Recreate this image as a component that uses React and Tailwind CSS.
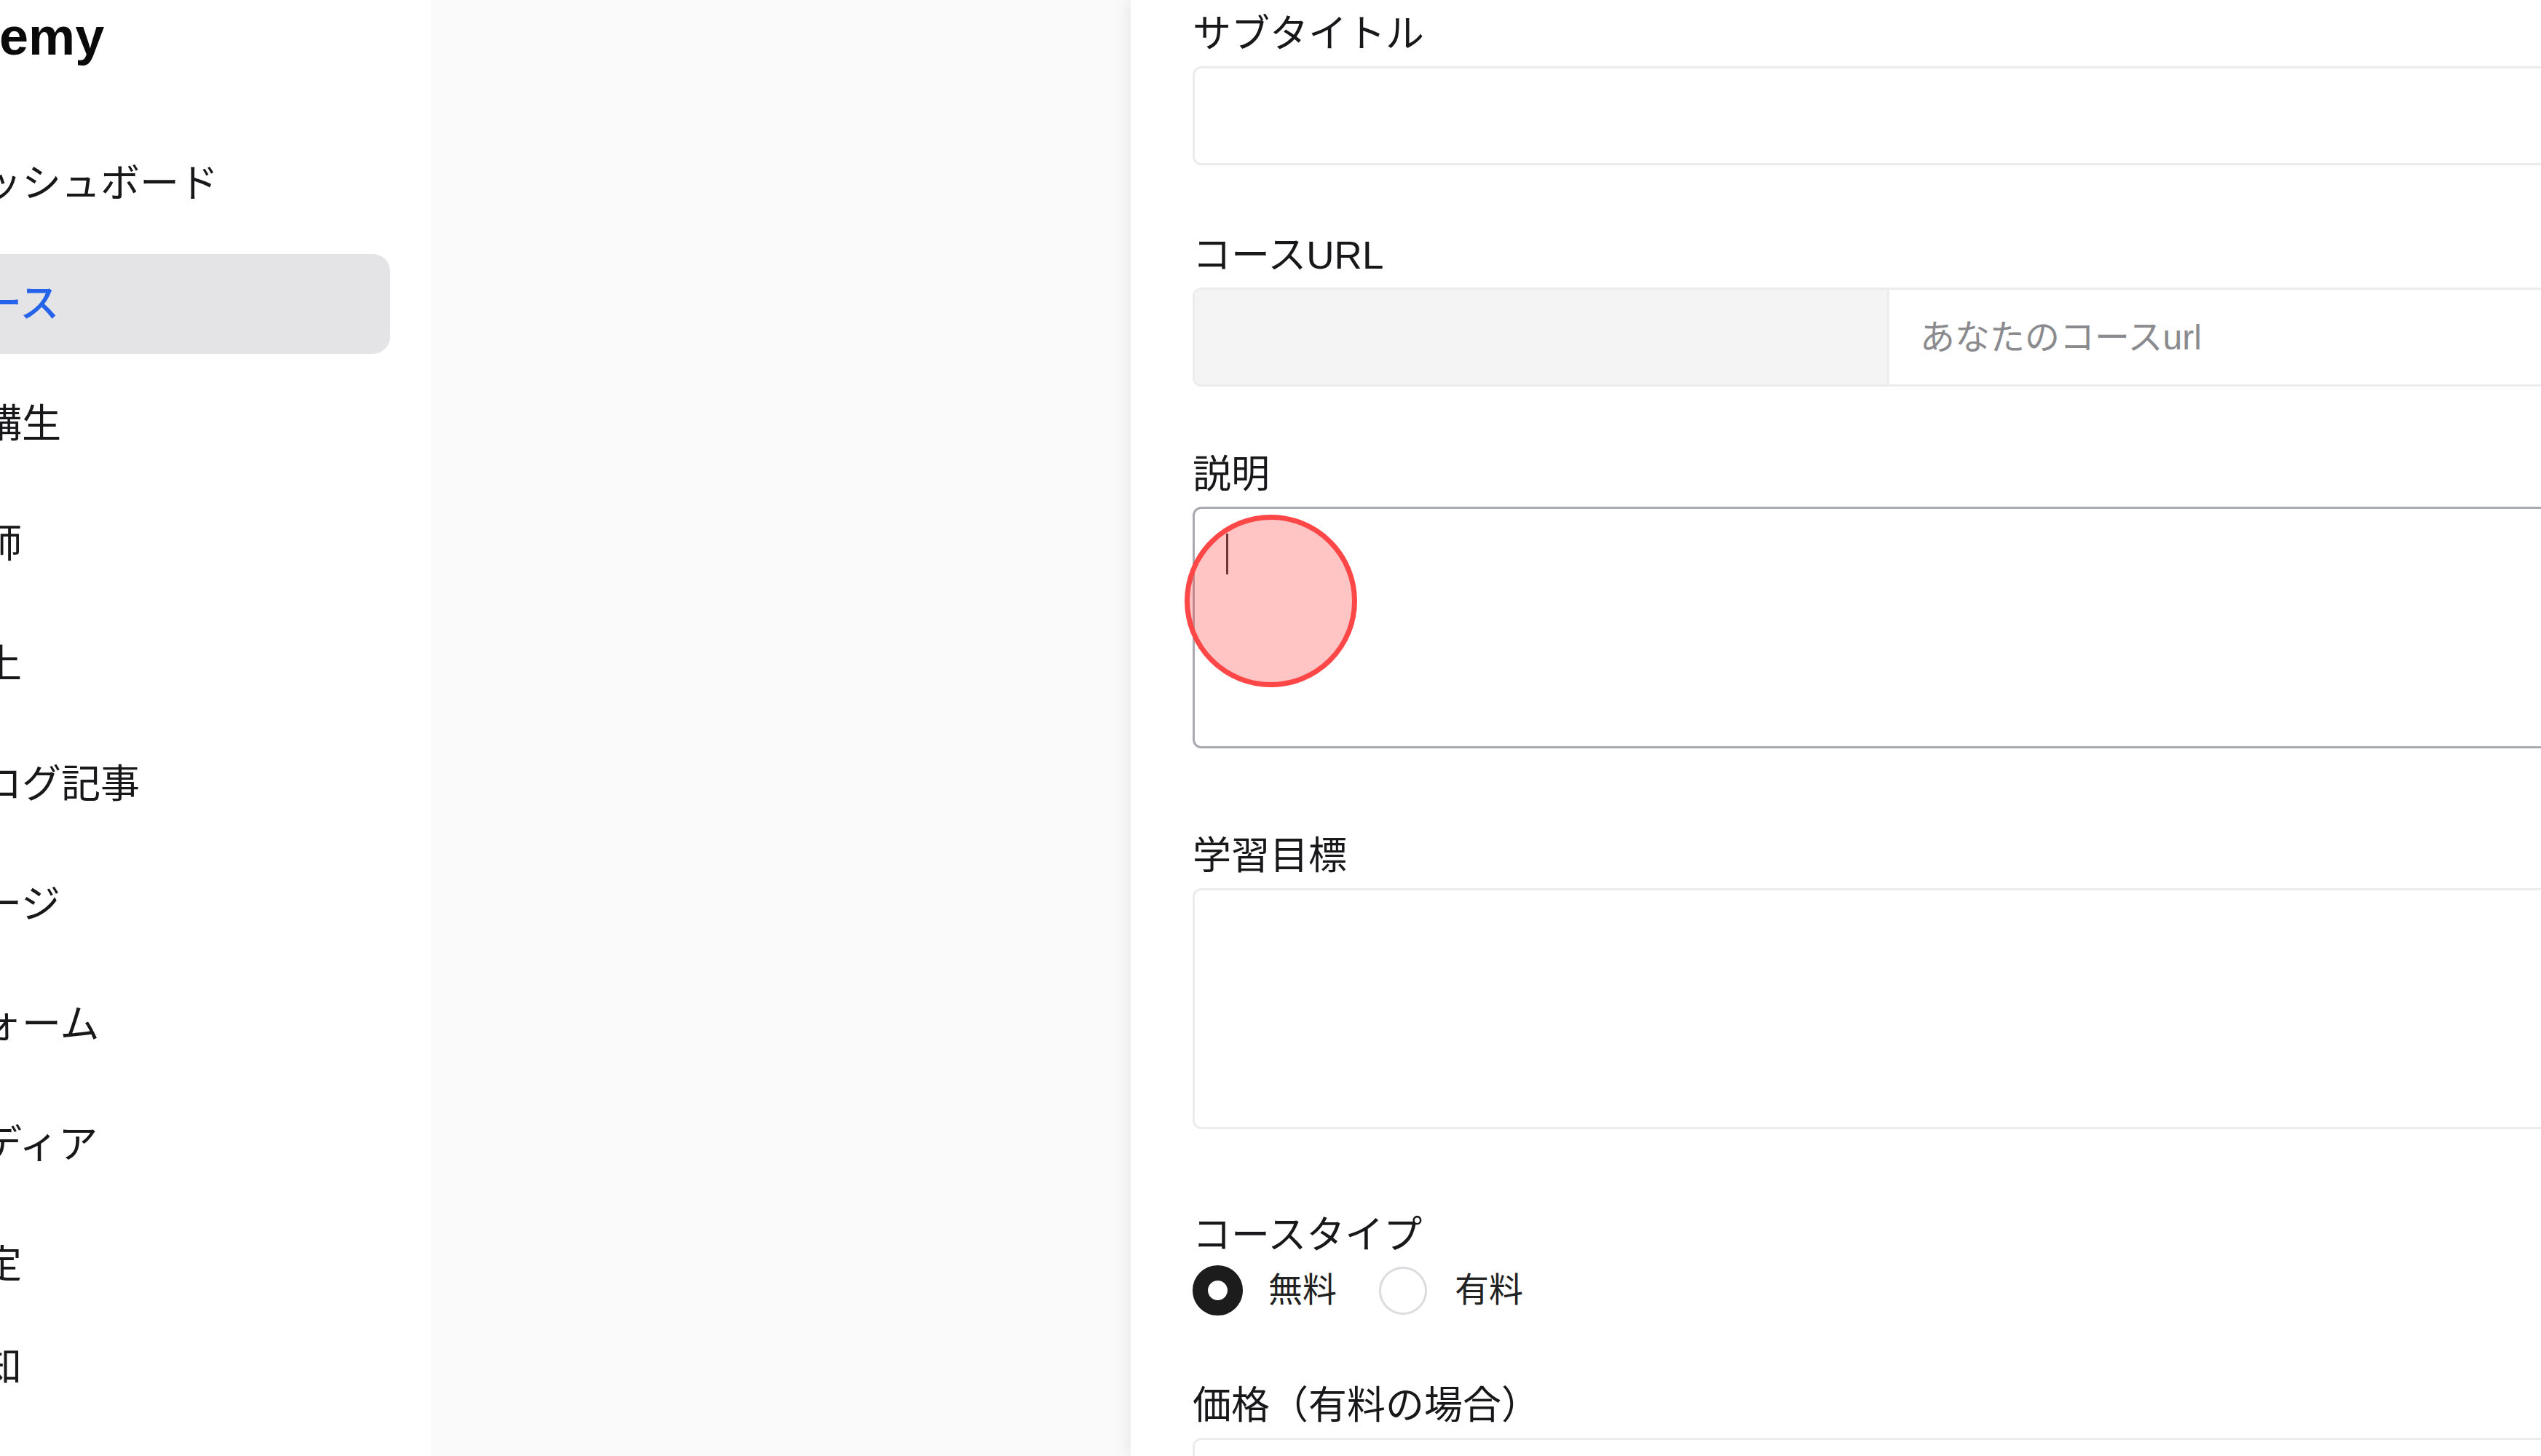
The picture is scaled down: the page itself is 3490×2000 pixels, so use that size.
import { useState } from 'react'

const NAV = [
  { label: 'ダッシュボード' },
  { label: 'コース', active: true },
  { label: '受講生' },
  { label: '講師' },
  { label: '売上' },
  { label: 'ブログ記事' },
  { label: 'ページ' },
  { label: 'フォーム' },
  { label: 'メディア' },
  { label: '設定' },
]

const FONT = "font-['Liberation_Sans','Noto_Sans_CJK_JP',sans-serif]"

function Label({ children }) {
  return (
    <label className="block text-[53px] leading-[80px] mb-[4px] text-[#18181b]">
      {children}
    </label>
  )
}

function Sidebar() {
  return (
    <aside className="w-[592px] shrink-0 bg-white overflow-hidden">
      <div className="-ml-[177px] h-[100px] text-[72px] leading-[100px] font-bold text-[#0a0a0a] whitespace-nowrap">
        Academy
      </div>
      <nav className="-ml-[120px] mr-[56px] mt-[84px] flex flex-col gap-[28px]">
        {NAV.map(item => (
          <div
            key={item.label}
            className={`h-[137px] pl-[42px] flex items-center rounded-[24px] text-[54px] whitespace-nowrap ${
              item.active ? 'bg-[#e4e4e7] text-[#2563eb] font-medium' : 'text-[#18181b]'
            }`}
          >
            {item.label}
          </div>
        ))}
        <div className="h-[137px] -mt-[24px] pl-[42px] flex items-center text-[54px] text-[#18181b] whitespace-nowrap">
          通知
        </div>
      </nav>
    </aside>
  )
}

function CourseForm() {
  const [type, setType] = useState('free')

  return (
    <div className="w-[2400px] shrink-0 bg-white shadow-[-8px_0_18px_rgba(0,0,0,0.06)] pl-[85px] pr-[85px] pt-[7px]">
      {/* サブタイトル */}
      <Label>サブタイトル</Label>
      <input
        type="text"
        className="block w-full h-[136px] rounded-[12px] border-[3px] border-[#ececee] bg-white px-[40px] text-[47px] outline-none"
      />

      {/* コースURL */}
      <div className="mt-[84px]">
        <Label>コースURL</Label>
        <div className="flex h-[136px] rounded-[12px] border-[3px] border-[#ececee] overflow-hidden">
          <div className="w-[954px] shrink-0 bg-[#f4f4f5] border-r-[3px] border-[#ececee]" />
          <input
            type="text"
            placeholder="あなたのコースurl"
            className="flex-1 h-full bg-white px-[42px] text-[48px] text-[#18181b] placeholder:text-[#8b8b8f] outline-none"
          />
        </div>
      </div>

      {/* 説明 */}
      <div className="mt-[81px]">
        <Label>説明</Label>
        <div className="relative h-[332px] rounded-[12px] border-[3px] border-[#a9a9b0] bg-white">
          <span className="absolute left-[43px] top-[34px] w-[3px] h-[56px] bg-[#333]" />
        </div>
      </div>

      {/* 学習目標 */}
      <div className="mt-[108px]">
        <Label>学習目標</Label>
        <div className="h-[331px] rounded-[12px] border-[3px] border-[#ececee] bg-white" />
      </div>

      {/* コースタイプ */}
      <div className="mt-[106px]">
        <Label>コースタイプ</Label>
        <div className="flex items-center h-[69px] -mt-[3px] text-[47px] text-[#222]">
          <button onClick={() => setType('free')} className="flex items-center">
            <span
              className={`w-[69px] h-[69px] rounded-full bg-white ${
                type === 'free' ? 'border-[21px] border-[#1c1c1c]' : 'border-[3px] border-[#dcdce0]'
              }`}
            />
            <span className="ml-[35px]">無料</span>
          </button>
          <button onClick={() => setType('paid')} className="flex items-center ml-[58px]">
            <span
              className={`w-[66px] h-[66px] rounded-full bg-white ${
                type === 'paid' ? 'border-[21px] border-[#1c1c1c]' : 'border-[3px] border-[#dcdce0]'
              }`}
            />
            <span className="ml-[38px]">有料</span>
          </button>
        </div>
      </div>

      {/* 価格 */}
      <div className="mt-[84px]">
        <Label>価格（有料の場合）</Label>
        <input
          type="text"
          className="block w-full h-[136px] rounded-[12px] border-[3px] border-[#ececee] bg-white px-[40px] text-[47px] outline-none"
        />
      </div>
    </div>
  )
}

export default function App() {
  return (
    <div className={`relative flex w-[3490px] h-[2000px] overflow-hidden bg-[#fafafa] ${FONT}`}>
      <Sidebar />
      <div className="w-[961px] shrink-0 bg-[#fafafa]" />
      <CourseForm />

      {/* クリック位置の表示 */}
      <div className="absolute left-[1627px] top-[707px] w-[237px] h-[237px] rounded-full border-[7px] border-[#ff4747] bg-[rgba(255,60,60,0.3)] pointer-events-none" />
    </div>
  )
}
